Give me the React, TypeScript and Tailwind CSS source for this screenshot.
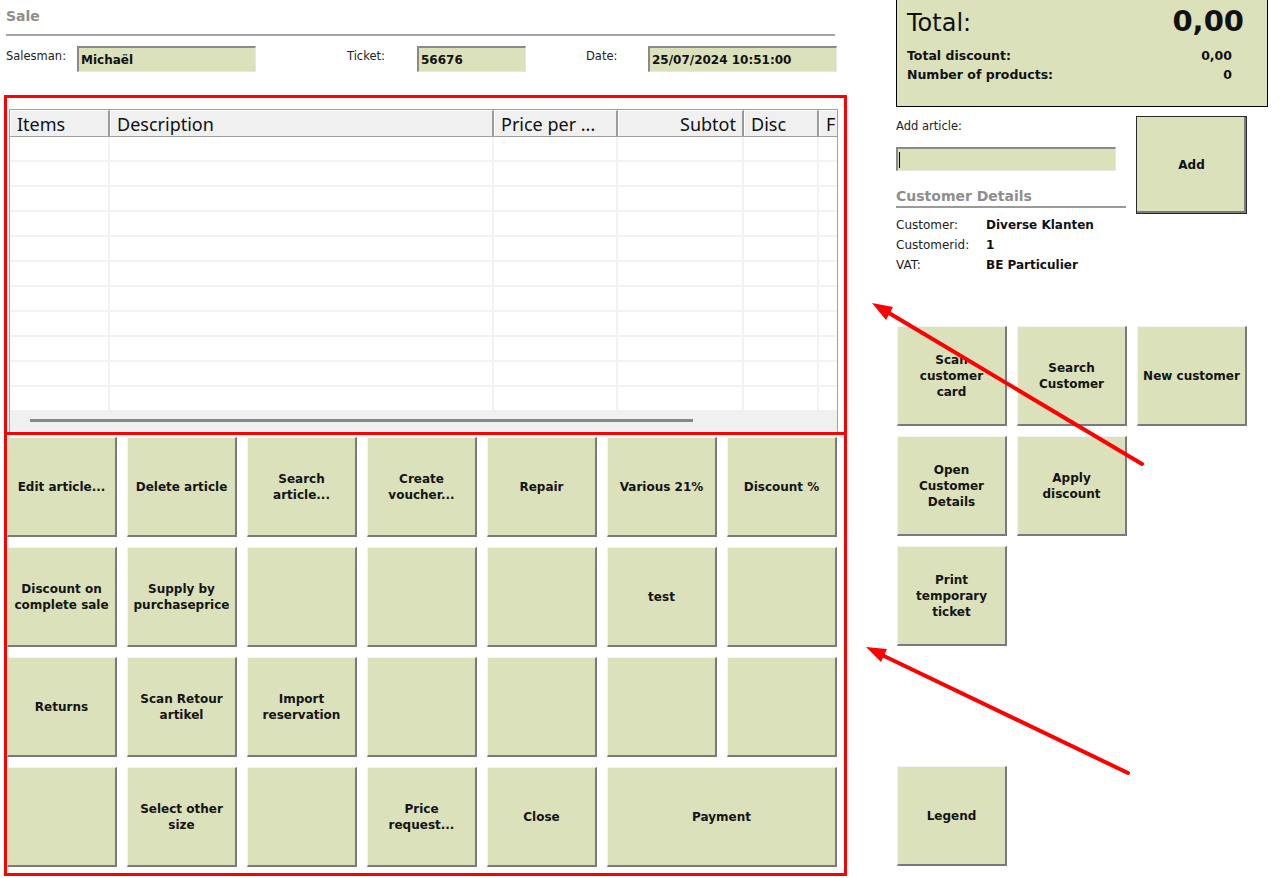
import React from 'react'

const font = { fontFamily: '"DejaVu Sans", Verdana, sans-serif' }

type Btn = { lines: string[]; span?: boolean }

const saleButtons: Btn[] = [
  { lines: ['Edit article...'] },
  { lines: ['Delete article'] },
  { lines: ['Search', 'article...'] },
  { lines: ['Create', 'voucher...'] },
  { lines: ['Repair'] },
  { lines: ['Various 21%'] },
  { lines: ['Discount %'] },
  { lines: ['Discount on', 'complete sale'] },
  { lines: ['Supply by', 'purchaseprice'] },
  { lines: [] },
  { lines: [] },
  { lines: [] },
  { lines: ['test'] },
  { lines: [] },
  { lines: ['Returns'] },
  { lines: ['Scan Retour', 'artikel'] },
  { lines: ['Import', 'reservation'] },
  { lines: [] },
  { lines: [] },
  { lines: [] },
  { lines: [] },
  { lines: [] },
  { lines: ['Select other', 'size'] },
  { lines: [] },
  { lines: ['Price', 'request...'] },
  { lines: ['Close'] },
  { lines: ['Payment'], span: true },
]

const customerButtons: (Btn | null)[] = [
  { lines: ['Scan', 'customer', 'card'] },
  { lines: ['Search', 'Customer'] },
  { lines: ['New customer'] },
  { lines: ['Open', 'Customer', 'Details'] },
  { lines: ['Apply', 'discount'] },
  null,
  { lines: ['Print', 'temporary', 'ticket'] },
  null,
  null,
  null,
  null,
  null,
  { lines: ['Legend'] },
]

const columns = [
  { label: 'Items', w: 'w-[100px]', align: 'text-left' },
  { label: 'Description', w: 'w-[384px]', align: 'text-left' },
  { label: 'Price per ...', w: 'w-[124px]', align: 'text-left' },
  { label: 'Subtot', w: 'w-[126px]', align: 'text-right' },
  { label: 'Disc', w: 'w-[75px]', align: 'text-left' },
  { label: 'F', w: 'w-[40px]', align: 'text-left' },
]

function PosButton({ btn, className = '' }: { btn: Btn; className?: string }) {
  return (
    <div
      className={`flex h-[100px] flex-col items-center justify-center border-t border-l border-t-[#f4f4f4] border-l-[#f4f4f4] border-r-2 border-b-2 border-r-[#7a7a7a] border-b-[#7a7a7a] bg-[#dbe1bb] text-center text-[12px] leading-[16px] font-bold text-[#141414] ${className}`}
    >
      {btn.lines.map((l) => (
        <span key={l} className="whitespace-nowrap">
          {l}
        </span>
      ))}
    </div>
  )
}

function Field({ value, className }: { value: string; className: string }) {
  return (
    <div
      className={`flex h-[26px] items-center border-t-2 border-l-2 border-t-[#8a8a8a] border-l-[#8a8a8a] border-r border-b border-r-[#e6e6e6] border-b-[#e6e6e6] bg-[#dbe1bb] pl-[2px] text-[12px] font-bold text-[#111] ${className}`}
    >
      {value}
    </div>
  )
}

function ItemsTable() {
  const rows = Array.from({ length: 11 })
  return (
    <div className="mt-[11px] ml-[2px] flex h-[323px] w-[829px] flex-col overflow-hidden border border-[#a0a0a0] border-b-0 bg-white">
      <div
        className="flex h-[27px] shrink-0 border-b border-[#a0a0a0] bg-[#f0f0f0] text-[18px] leading-[27px] text-[#111]"
        style={{ fontFamily: '"Noto Sans", "Open Sans", sans-serif' }}
      >
        {columns.map((c) => (
          <div
            key={c.label}
            className={`${c.w} shrink-0 overflow-hidden whitespace-nowrap border-t border-l border-t-white border-l-white border-r-2 border-r-[#9a9a9a] px-[6px] ${c.align}`}
          >
            {c.label}
          </div>
        ))}
      </div>
      <div className="h-[273px] shrink-0 overflow-hidden">
        {rows.map((_, i) => (
          <div key={i} className="flex h-[25px] border-b-2 border-[#f2f2f2]">
            {columns.map((c) => (
              <div key={c.label} className={`${c.w} shrink-0 border-r-2 border-[#f2f2f2]`} />
            ))}
          </div>
        ))}
      </div>
      <div className="flex h-[21px] shrink-0 items-center bg-[#f0f0f0] pl-[20px]">
        <div className="h-[3px] w-[663px] bg-[#888888]" />
      </div>
    </div>
  )
}

function Arrows() {
  return (
    <svg className="pointer-events-none absolute top-0 left-0" width="1287" height="878">
      <line x1="1142" y1="464" x2="889" y2="313" stroke="#ff0000" strokeWidth="4" strokeLinecap="round" />
      <polygon points="872,303 893,307 886,320" fill="#ff0000" />
      <line x1="1128" y1="773" x2="884" y2="656" stroke="#ff0000" strokeWidth="4" strokeLinecap="round" />
      <polygon points="866,647 887,649 881,662" fill="#ff0000" />
    </svg>
  )
}

export default function App() {
  return (
    <div className="relative flex h-[878px] w-[1287px] overflow-hidden bg-white text-[#111]" style={font}>
      {/* left: sale panel */}
      <div className="flex w-[848px] shrink-0 flex-col">
        <div className="ml-[6px] w-[829px] border-b-2 border-[#a6a6a6] pt-[8px] pb-[10px] text-[14px] leading-[16px] font-bold text-[#8e8e8e]">
          Sale
        </div>
        <div className="mt-[10px] flex items-start text-[11.5px] text-[#222]">
          <span className="ml-[6px] w-[71px] pt-[2px]">Salesman:</span>
          <Field value="Michaël" className="w-[179px]" />
          <span className="ml-[91px] w-[70px] pt-[2px]">Ticket:</span>
          <Field value="56676" className="w-[109px]" />
          <span className="ml-[60px] w-[62px] pt-[2px]">Date:</span>
          <Field value="25/07/2024 10:51:00" className="w-[189px]" />
        </div>

        <div className="mt-[23px] ml-[4px] h-[340px] w-[843px] border-[3px] border-[#ff0000]">
          <ItemsTable />
        </div>

        <div className="-mt-[3px] ml-[4px] h-[444px] w-[843px] border-[3px] border-[#ff0000] pt-[2px]">
          <div className="grid grid-cols-[repeat(7,110px)] gap-[10px]">
            {saleButtons.map((b, i) => (
              <PosButton key={i} btn={b} className={b.span ? 'col-span-2' : ''} />
            ))}
          </div>
        </div>
      </div>

      {/* right: totals and customer */}
      <div className="ml-[48px] flex w-[372px] flex-col">
        <div className="h-[107px] border border-t-0 border-black bg-[#dbe1bb] px-[10px]">
          <div className="flex items-baseline justify-between pt-[4px] pr-[13px]">
            <span className="text-[24px] leading-[34px]">Total:</span>
            <span className="text-[29px] leading-[34px] font-bold">0,00</span>
          </div>
          <div className="mt-[6px] flex justify-between pr-[25px] text-[12.5px] leading-[19px] font-bold">
            <div className="flex flex-col">
              <span>Total discount:</span>
              <span>Number of products:</span>
            </div>
            <div className="flex flex-col items-end">
              <span>0,00</span>
              <span>0</span>
            </div>
          </div>
        </div>

        <div className="mt-[9px] flex">
          <div className="flex w-[230px] flex-col">
            <span className="pt-[2px] text-[11.5px] leading-[16px] text-[#222]">Add article:</span>
            <div className="mt-[13px] flex h-[24px] w-[220px] items-center border-t-2 border-l-2 border-t-[#8a8a8a] border-l-[#8a8a8a] border-r border-b border-r-[#e6e6e6] border-b-[#e6e6e6] bg-[#dbe1bb] pl-[1px]">
              <div className="h-[16px] w-px bg-black" />
            </div>
            <div className="mt-[16px] border-b-2 border-[#9a9a9a] pb-[1px] text-[14px] leading-[18px] font-bold text-[#8e8e8e]">
              Customer Details
            </div>
            <div className="mt-[7px] grid grid-cols-[90px_1fr] text-[12px] leading-[20px]">
              <span className="text-[#222]">Customer:</span>
              <span className="font-bold">Diverse Klanten</span>
              <span className="text-[#222]">Customerid:</span>
              <span className="font-bold">1</span>
              <span className="text-[#222]">VAT:</span>
              <span className="font-bold">BE Particulier</span>
            </div>
          </div>
          <div className="ml-[10px] flex h-[98px] w-[111px] items-center justify-center border border-[#2a2a2a] bg-[#dbe1bb] text-[12px] font-bold shadow-[inset_-2px_-2px_0_#7a7a7a]">
            Add
          </div>
        </div>

        <div className="mt-[51px] ml-[1px] grid grid-cols-[repeat(3,110px)] gap-[10px]">
          {customerButtons.map((b, i) =>
            b ? <PosButton key={i} btn={b} /> : <div key={i} className="h-[100px]" />
          )}
        </div>
      </div>

      <Arrows />
    </div>
  )
}
